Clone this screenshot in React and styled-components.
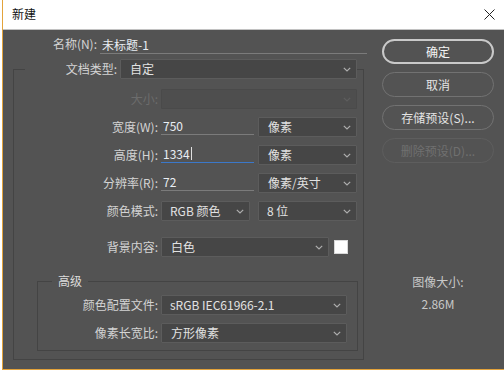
import React from 'react';
import styled, { createGlobalStyle } from 'styled-components';

const GlobalStyle = createGlobalStyle`
  html, body {
    margin: 0;
    padding: 0;
    background: #ffffff;
  }
  body {
    font-family: "Noto Sans CJK SC", "Noto Sans", sans-serif;
    font-size: 12px;
  }
`;

const Frame = styled.div`
  width: 504px;
  height: 373px;
  background: #ffffff;
  overflow: hidden;
`;

const Window = styled.div`
  margin-left: 2px;
  width: 502px;
  height: 370px;
  border-left: 1px solid #e3a33b;
  border-bottom: 1px solid #e3a33b;
  box-sizing: border-box;
  display: flex;
  flex-direction: column;
`;

const TitleBar = styled.div`
  height: 30px;
  box-sizing: border-box;
  border-bottom: 1px solid #c2c2c2;
  background: #ffffff;
  display: flex;
  align-items: center;
  justify-content: space-between;
  padding: 0 9px 1px 9px;
  color: #111111;
  font-size: 12px;
  line-height: 16px;
`;

const Body = styled.div`
  flex: 1;
  background: #535353;
  display: flex;
  color: #d6d6d6;
  line-height: 16px;
`;

const FormCol = styled.div`
  width: 367px;
  padding-top: 6px;
  display: flex;
  flex-direction: column;
`;

const Label = styled.div`
  width: ${p => p.$w}px;
  flex: none;
  text-align: right;
  white-space: nowrap;
  color: ${p => (p.$disabled ? '#6c6c6c' : '#d4d4d4')};
`;

const Row = styled.div`
  display: flex;
  align-items: ${p => (p.$top ? 'flex-start' : 'center')};
  gap: 3px;
  height: 20px;
  margin-top: ${p => p.$mt || 0}px;
`;

const NameRow = styled(Row)`
  height: 19px;
  align-items: flex-start;
`;

const TextInput = styled.div`
  width: ${p => p.$w}px;
  height: 18px;
  box-sizing: border-box;
  border-bottom: 1px solid ${p => (p.$focus ? '#3b78c9' : '#7b7b7b')};
  color: #e9eef4;
  padding-left: 2px;
  display: flex;
  align-items: center;
`;

const Caret = styled.span`
  display: inline-block;
  width: 1px;
  height: 13px;
  margin-left: 1px;
  background: #e0e0e0;
`;

const SelectBox = styled.div`
  width: ${p => p.$w}px;
  height: 20px;
  box-sizing: border-box;
  flex: none;
  border: 1px solid ${p => (p.$disabled ? '#4a4a4a' : '#5c5c5c')};
  background: ${p => (p.$disabled ? '#4e4e4e' : '#464646')};
  color: #e2e2e2;
  border-radius: 1px;
  display: flex;
  align-items: center;
  justify-content: space-between;
  padding: 0 5px 0 ${p => p.$pl || 9}px;
  white-space: nowrap;
`;

const Pair = styled.div`
  display: flex;
  align-items: flex-start;
  gap: ${p => p.$gap}px;
  height: 20px;
`;

const Swatch = styled.div`
  width: 14px;
  height: 14px;
  box-sizing: border-box;
  background: #ffffff;
  border: 1px solid #d8d8d8;
  flex: none;
`;

const Group = styled.fieldset`
  margin: 4px 0 0 10px;
  width: 351px;
  box-sizing: border-box;
  border: 1px solid #444444;
  padding: 10px 6px 8px 0;
  min-width: 0;
  display: flex;
  flex-direction: column;
  gap: 8px;
`;

const GroupLegend = styled.legend`
  margin-left: 11px;
  padding: 0;
  width: 332px;
  height: 20px;
  display: flex;
  align-items: center;
  gap: 3px;
`;

const SubGroup = styled.fieldset`
  margin: 8px 0 0 23px;
  width: 321px;
  box-sizing: border-box;
  border: 1px solid #444444;
  padding: 6px 9px 7px 0;
  min-width: 0;
  display: flex;
  flex-direction: column;
  gap: 8px;
`;

const SubLegend = styled.legend`
  margin-left: 14px;
  padding: 0 6px;
  line-height: 16px;
  color: #dcdcdc;
`;

const RightCol = styled.div`
  width: 112px;
  margin-left: 12px;
  padding-top: 9px;
  display: flex;
  flex-direction: column;
  gap: 8px;
`;

const Button = styled.div`
  height: 25px;
  box-sizing: border-box;
  border-radius: 13px;
  border: ${p => (p.$primary ? '2px solid #c9c9c9' : `1px solid ${p.$disabled ? '#5e5e5e' : '#727272'}`)};
  color: ${p => (p.$disabled ? '#707070' : p.$primary ? '#f4f4f4' : '#e4e4e4')};
  display: flex;
  align-items: center;
  justify-content: center;
  white-space: nowrap;
`;

const SizeInfo = styled.div`
  margin-top: 103px;
  text-align: center;
  color: #c8c8c8;
  display: flex;
  flex-direction: column;
  gap: 6px;
`;

const Chevron = ({ dim }) => (
  <svg width="8" height="5" viewBox="0 0 8 5" style={{ flex: 'none' }}>
    <polyline
      points="0.8,0.8 4,4 7.2,0.8"
      fill="none"
      stroke={dim ? '#5e5e5e' : '#aeaeae'}
      strokeWidth="1.2"
    />
  </svg>
);

const Select = ({ w, children, disabled, pl }) => (
  <SelectBox $w={w} $disabled={disabled} $pl={pl}>
    <span>{children}</span>
    <Chevron dim={disabled} />
  </SelectBox>
);

const CloseIcon = () => (
  <svg width="11" height="11" viewBox="0 0 11 11">
    <path d="M0.5 0.5 L10.5 10.5 M10.5 0.5 L0.5 10.5" stroke="#222" strokeWidth="1" fill="none" />
  </svg>
);

export default function App() {
  return (
    <Frame>
      <GlobalStyle />
      <Window>
        <TitleBar>
          <span>新建</span>
          <CloseIcon />
        </TitleBar>
        <Body>
          <FormCol>
            <NameRow>
              <Label $w={94}>名称(N):</Label>
              <TextInput $w={267}>未标题-1</TextInput>
            </NameRow>

            <Group>
              <GroupLegend>
                <Label $w={92}>文档类型:</Label>
                <Select w={237}>自定</Select>
              </GroupLegend>

              <Row>
                <Label $w={144} $disabled>大小:</Label>
                <Select w={196} disabled> </Select>
              </Row>
              <Row $top>
                <Label $w={144} style={{ lineHeight: '20px' }}>宽度(W):</Label>
                <Pair $gap={4}>
                  <TextInput $w={93}>750</TextInput>
                  <Select w={99}>像素</Select>
                </Pair>
              </Row>
              <Row $top>
                <Label $w={144} style={{ lineHeight: '20px' }}>高度(H):</Label>
                <Pair $gap={4}>
                  <TextInput $w={93} $focus>1334<Caret /></TextInput>
                  <Select w={99}>像素</Select>
                </Pair>
              </Row>
              <Row $top>
                <Label $w={144} style={{ lineHeight: '20px' }}>分辨率(R):</Label>
                <Pair $gap={4}>
                  <TextInput $w={93}>72</TextInput>
                  <Select w={99}>像素/英寸</Select>
                </Pair>
              </Row>
              <Row>
                <Label $w={144}>颜色模式:</Label>
                <Pair $gap={8}>
                  <Select w={89} pl={8}>RGB 颜色</Select>
                  <Select w={99} pl={8}>8 位</Select>
                </Pair>
              </Row>
              <Row $mt={8}>
                <Label $w={144}>背景内容:</Label>
                <Pair $gap={5} style={{ alignItems: 'center' }}>
                  <Select w={168}>白色</Select>
                  <Swatch />
                </Pair>
              </Row>

              <SubGroup>
                <SubLegend>高级</SubLegend>
                <Row>
                  <Label $w={120}>颜色配置文件:</Label>
                  <Select w={186} pl={8}>sRGB IEC61966-2.1</Select>
                </Row>
                <Row>
                  <Label $w={120}>像素长宽比:</Label>
                  <Select w={186}>方形像素</Select>
                </Row>
              </SubGroup>
            </Group>
          </FormCol>

          <RightCol>
            <Button $primary>确定</Button>
            <Button>取消</Button>
            <Button>存储预设(S)...</Button>
            <Button $disabled>删除预设(D)...</Button>
            <SizeInfo>
              <span>图像大小:</span>
              <span>2.86M</span>
            </SizeInfo>
          </RightCol>
        </Body>
      </Window>
    </Frame>
  );
}
